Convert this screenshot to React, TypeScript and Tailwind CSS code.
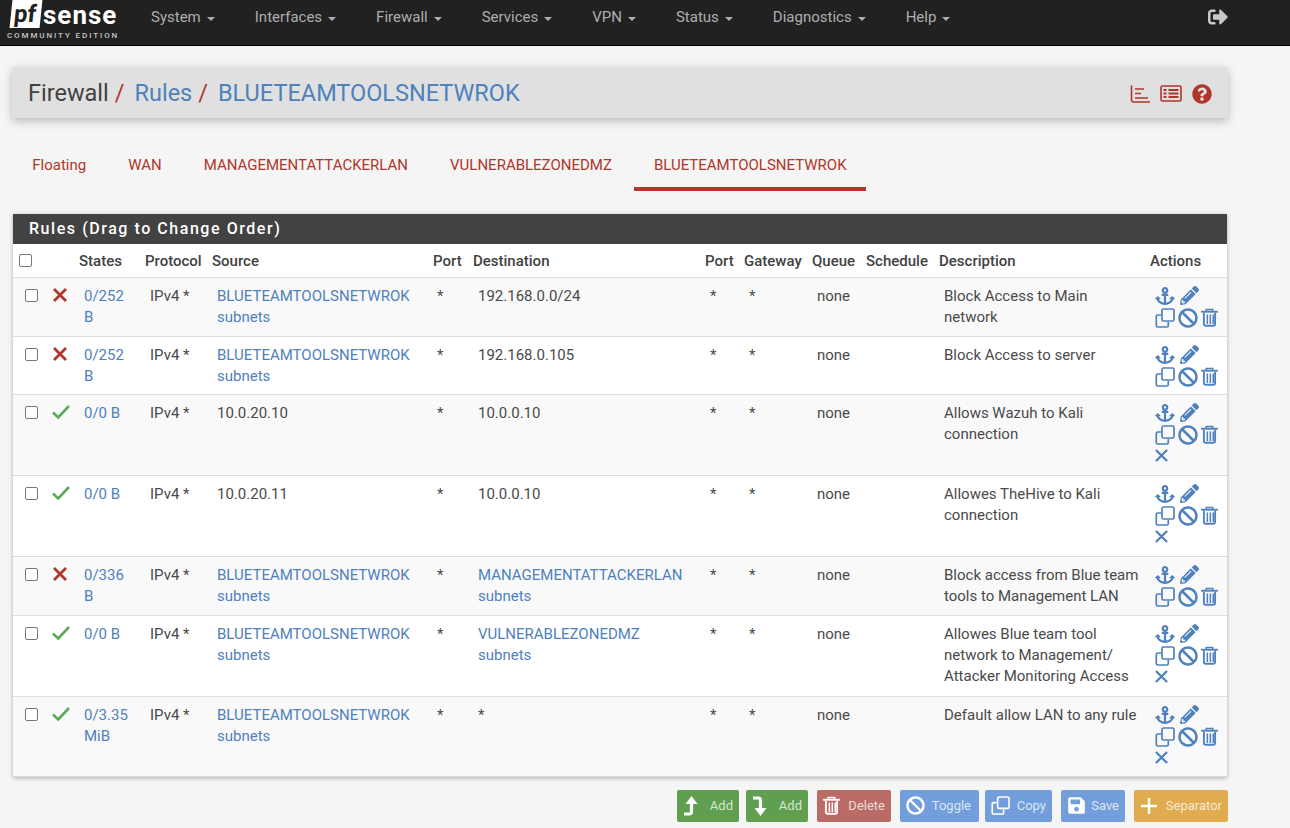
import React from 'react';
import { FaAnchor, FaPencilAlt, FaBan, FaSignOutAlt, FaSave, FaQuestionCircle } from 'react-icons/fa';

type Rule = {
  pass: boolean;
  states: string[];
  source: string[];
  srcLink: boolean;
  dest: string[];
  destLink: boolean;
  desc: string[];
  extra: boolean;
  height: string;
  striped: boolean;
};

const NAV = ['System', 'Interfaces', 'Firewall', 'Services', 'VPN', 'Status', 'Diagnostics', 'Help'];
const NET = 'BLUETEAMTOOLSNETWROK';

const RULES: Rule[] = [
  { pass: false, states: ['0/252', 'B'], source: [NET, 'subnets'], srcLink: true, dest: ['192.168.0.0/24'], destLink: false, desc: ['Block Access to Main', 'network'], extra: false, height: 'h-[59px]', striped: true },
  { pass: false, states: ['0/252', 'B'], source: [NET, 'subnets'], srcLink: true, dest: ['192.168.0.105'], destLink: false, desc: ['Block Access to server'], extra: false, height: 'h-[58px]', striped: false },
  { pass: true, states: ['0/0 B'], source: ['10.0.20.10'], srcLink: false, dest: ['10.0.0.10'], destLink: false, desc: ['Allows Wazuh to Kali', 'connection'], extra: true, height: 'h-[81px]', striped: true },
  { pass: true, states: ['0/0 B'], source: ['10.0.20.11'], srcLink: false, dest: ['10.0.0.10'], destLink: false, desc: ['Allowes TheHive to Kali', 'connection'], extra: true, height: 'h-[81px]', striped: false },
  { pass: false, states: ['0/336', 'B'], source: [NET, 'subnets'], srcLink: true, dest: ['MANAGEMENTATTACKERLAN', 'subnets'], destLink: true, desc: ['Block access from Blue team', 'tools to Management LAN'], extra: false, height: 'h-[59px]', striped: true },
  { pass: true, states: ['0/0 B'], source: [NET, 'subnets'], srcLink: true, dest: ['VULNERABLEZONEDMZ', 'subnets'], destLink: true, desc: ['Allowes Blue team tool', 'network to Management/', 'Attacker Monitoring Access'], extra: true, height: 'h-[81px]', striped: false },
  { pass: true, states: ['0/3.35', 'MiB'], source: [NET, 'subnets'], srcLink: true, dest: ['*'], destLink: false, desc: ['Default allow LAN to any rule'], extra: true, height: 'h-[80px]', striped: true },
];

// the FA4 icons pfSense uses aren't all in the package, so a few are drawn here
const CloneIcon = ({ size = 20 }: { size?: number }) => (
  <svg width={size} height={size} viewBox="0 0 20 20" fill="none" stroke="currentColor" strokeWidth="1.7">
    <rect x="7" y="1" width="12" height="12" rx="1.5" />
    <path d="M6 7H2.8A1.5 1.5 0 0 0 1.3 8.5v9A1.5 1.5 0 0 0 2.8 19h9a1.5 1.5 0 0 0 1.5-1.5V14" />
  </svg>
);

const TrashIcon = ({ size = 18 }: { size?: number }) => (
  <svg width={size} height={size * 1.1} viewBox="0 0 18 20" fill="none" stroke="currentColor" strokeWidth="2">
    <path d="M0 4h18" />
    <path d="M5.5 4V1.5h7V4" strokeWidth="1.6" />
    <path d="M3 5v12.5A1.5 1.5 0 0 0 4.5 19h9a1.5 1.5 0 0 0 1.5-1.5V5" />
    <path d="M6.7 7v10M9.9 7v10M13 7v10" strokeWidth="1.6" />
  </svg>
);

const CrossIcon = ({ size, weight }: { size: number; weight: number }) => (
  <svg width={size} height={size} viewBox="0 0 14 14" fill="none" stroke="currentColor" strokeWidth={weight}>
    <path d="M1 1l12 12M13 1L1 13" />
  </svg>
);

const TickIcon = () => (
  <svg width="18" height="14" viewBox="0 0 18 14" fill="none" stroke="currentColor" strokeWidth="2.6">
    <path d="M1 7.5l5.2 5L17 1" />
  </svg>
);

const PlusIcon = () => (
  <svg width="18" height="18" viewBox="0 0 18 18" fill="none" stroke="currentColor" strokeWidth="2.4">
    <path d="M9 1v16M1 9h16" />
  </svg>
);

const ListIcon = () => (
  <svg width="22" height="17" viewBox="0 0 22 17" fill="none" stroke="currentColor" strokeWidth="1.6">
    <rect x="1" y="1" width="20" height="15" rx="1.5" />
    <path d="M3.5 5h3M8.5 5h10M3.5 8.5h3M8.5 8.5h10M3.5 12h3M8.5 12h10" strokeWidth="1.8" />
  </svg>
);

const LevelUp = () => (
  <svg width="16" height="22" viewBox="0 0 16 22" fill="currentColor" stroke="none">
    <path d="M1 19h5q2.5 0 2.5-2.5V7" fill="none" stroke="currentColor" strokeWidth="3.2" />
    <path d="M2.5 9L8.5 1l6 8z" />
  </svg>
);

const LevelDown = () => (
  <svg width="16" height="22" viewBox="0 0 16 22" fill="currentColor" stroke="none">
    <path d="M1 3h5q2.5 0 2.5 2.5V15" fill="none" stroke="currentColor" strokeWidth="3.2" />
    <path d="M2.5 13L8.5 21l6-8z" />
  </svg>
);

const Lines = ({ lines, link }: { lines: string[]; link?: boolean }) => (
  <div className={link ? 'text-[#4f81bd]' : ''}>
    {lines.map((l) => (
      <div key={l} className="whitespace-nowrap">{l}</div>
    ))}
  </div>
);

const Check = () => (
  <span className="block w-[13px] h-[13px] rounded-[2px] border border-[#767676] bg-white" />
);

const BottomButton = ({ icon, label, className }: { icon: React.ReactNode; label: string; className: string }) => (
  <button className={`h-[32px] flex items-center justify-between pl-[6px] pr-[6px] rounded-[2px] text-[13px] text-white/75 ${className}`}>
    <span className="text-white text-[19px]">{icon}</span>
    <span>{label}</span>
  </button>
);

export default function App() {
  return (
    <div className="w-[1290px] h-[828px] overflow-hidden bg-[#f5f5f5] text-[#4a4a4a] text-[15px] leading-[21.4px]" style={{ fontFamily: 'Roboto, sans-serif' }}>
      <nav className="h-[46px] bg-[#212121] border-b border-black flex items-center text-[#aeaeae]">
        <div className="w-[131px] h-[45px] pl-[7px] shrink-0">
          <div className="flex items-start h-[29px]">
            <span className="bg-white text-[#212121] font-bold -skew-x-6 text-[24px] h-[28px] w-[30px] pl-[3px] ml-[4px] leading-[28px]">pf</span>
            <span className="text-white font-bold text-[26px] leading-[31px] tracking-[1px] ml-[2px]">sense</span>
          </div>
          <div className="text-[8px] leading-[10px] tracking-[1.9px] text-[#c4c4c4] font-medium mt-[2px] whitespace-nowrap">COMMUNITY EDITION</div>
        </div>
        {NAV.map((item) => (
          <div key={item} className="flex items-center px-[20px] pb-[9px]">
            <span>{item}</span>
            <span className="ml-[6px] mt-[2px] w-0 h-0 border-x-[4px] border-x-transparent border-t-[4px] border-t-[#aeaeae]" />
          </div>
        ))}
        <div className="ml-auto mr-[62px] pb-[12px] text-[#c8c8c8] text-[20px]"><FaSignOutAlt /></div>
      </nav>

      <div className="px-[12px] pt-[21px]">
        <div className="w-[1216px] h-[51px] pt-[2px] bg-[#e0e0e0] rounded-[3px] shadow-[0_3px_10px_rgba(0,0,0,0.25)] flex items-center pl-[16px] pr-[16px] text-[23.5px] leading-none">
          <span className="text-[#424242]">Firewall</span>
          <span className="text-[#b0352a] ml-[6px]">/</span>
          <span className="text-[#4f81bd] ml-[10px]">Rules</span>
          <span className="text-[#b0352a] ml-[6px]">/</span>
          <span className="text-[#4f81bd] ml-[10px]">{NET}</span>
          <div className="ml-auto flex items-center gap-[10px] text-[#b0352a]">
            <svg width="20" height="18" viewBox="0 0 20 18" fill="none" stroke="currentColor" strokeWidth="1.6">
              <path d="M1.5 0.5V15a2 2 0 0 0 2 2H20" />
              <path d="M5 4h9M5 8.5h6M5 13h13" />
            </svg>
            <ListIcon />
            <FaQuestionCircle className="text-[20px]" />
          </div>
        </div>

        <div className="flex gap-[2px] mt-[29px] h-[44px]">
          {['Floating', 'WAN', 'MANAGEMENTATTACKERLAN', 'VULNERABLEZONEDMZ', NET].map((t, i) => (
            <div key={t} className={`pr-[19.75px] pl-[20.25px] pt-[8px] text-[#b0352a] ${i === 4 ? 'border-b-[4px] border-[#b0352a]' : ''}`}>{t}</div>
          ))}
        </div>

        <div className="mt-[23px] ml-[1px] w-[1214px] bg-white shadow-[0_1px_4px_rgba(0,0,0,0.3)]">
          <div className="h-[30px] bg-[#424242] text-white font-medium text-[16px] tracking-[1.55px] leading-[29px] pl-[16px]">Rules (Drag to Change Order)</div>
          <table className="w-full table-fixed border-collapse">
            <colgroup>
              <col className="w-[33px]" />
              <col className="w-[33px]" />
              <col className="w-[66px]" />
              <col className="w-[67px]" />
              <col className="w-[221px]" />
              <col className="w-[40px]" />
              <col className="w-[232px]" />
              <col className="w-[39px]" />
              <col className="w-[68px]" />
              <col className="w-[54px]" />
              <col className="w-[73px]" />
              <col className="w-[211px]" />
              <col className="w-[77px]" />
            </colgroup>
            <thead>
              <tr className="h-[33px] border-b border-[#dddddd] text-left text-[#424242]">
                <th className="pl-[6px] pt-[1px] font-medium"><Check /></th>
                <th />
                {['States', 'Protocol', 'Source', 'Port', 'Destination', 'Port', 'Gateway', 'Queue', 'Schedule', 'Description', 'Actions'].map((h, i) => (
                  <th key={i} className="font-medium whitespace-nowrap px-0 pt-[2px] pb-0">{h}</th>
                ))}
              </tr>
            </thead>
            <tbody>
              {RULES.map((r, i) => (
                <tr key={i} className={`${r.height} border-b border-[#dddddd] align-top ${r.striped ? 'bg-[#f9f9f9]' : 'bg-white'}`}>
                  <td className="pl-[12px] pt-[11px]"><Check /></td>
                  <td className="pl-[6px] pt-[10px]">
                    {r.pass ? <span className="block text-[#5cab5c]"><TickIcon /></span> : <span className="block text-[#b0352a] ml-[1px]"><CrossIcon size={14} weight={2.8} /></span>}
                  </td>
                  <td className="pl-[5px] pt-[8px]"><Lines lines={r.states} link /></td>
                  <td className="pl-[5px] pt-[8px]">IPv4 *</td>
                  <td className="pl-[5px] pt-[8px]"><Lines lines={r.source} link={r.srcLink} /></td>
                  <td className="pl-[4px] pt-[8px]">*</td>
                  <td className="pl-[5px] pt-[8px]"><Lines lines={r.dest} link={r.destLink} /></td>
                  <td className="pl-[5px] pt-[8px]">*</td>
                  <td className="pl-[5px] pt-[8px]">*</td>
                  <td className="pl-[5px] pt-[8px]">none</td>
                  <td />
                  <td className="pl-[5px] pt-[8px]"><Lines lines={r.desc} /></td>
                  <td className="pl-[5px] pt-[7px]">
                    <div className="w-[66px] text-[#4f81bd]">
                      <div className="h-[22px] flex items-center gap-[5px]">
                        <FaAnchor className="text-[20px]" />
                        <FaPencilAlt className="text-[19px]" />
                      </div>
                      <div className="h-[22px] flex items-center gap-[3px]">
                        <CloneIcon />
                        <FaBan className="text-[20px]" />
                        <TrashIcon size={17} />
                      </div>
                      {r.extra && <div className="h-[20px] flex items-center"><CrossIcon size={13} weight={2.4} /></div>}
                    </div>
                  </td>
                </tr>
              ))}
            </tbody>
          </table>
        </div>

        <div className="mt-[13px] flex justify-end w-[1216px]">
          <BottomButton icon={<LevelUp />} label="Add" className="w-[62px] bg-[#5f9f4f]" />
          <BottomButton icon={<LevelDown />} label="Add" className="w-[62px] ml-[7px] bg-[#5f9f4f]" />
          <BottomButton icon={<TrashIcon size={17} />} label="Delete" className="w-[74px] ml-[9px] bg-[#bb6b66]" />
          <BottomButton icon={<FaBan />} label="Toggle" className="w-[79px] ml-[9px] !pr-[8px] bg-[#729fdb]" />
          <BottomButton icon={<CloneIcon size={19} />} label="Copy" className="w-[67px] ml-[6px] bg-[#729fdb]" />
          <BottomButton icon={<FaSave />} label="Save" className="w-[64px] ml-[9px] bg-[#729fdb]" />
          <BottomButton icon={<PlusIcon />} label="Separator" className="w-[94px] ml-[9px] bg-[#e0ac4f]" />
        </div>
      </div>
    </div>
  );
}
